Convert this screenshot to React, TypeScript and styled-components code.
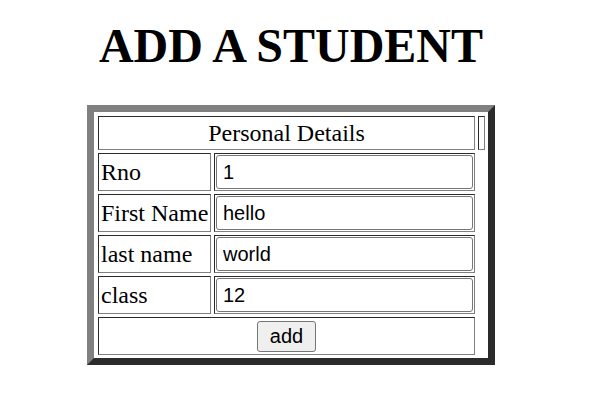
import React from "react";
import styled, { createGlobalStyle } from "styled-components";

const GlobalStyle = createGlobalStyle`
  html, body {
    margin: 0;
    padding: 0;
    background: #ffffff;
  }
  body {
    font-family: "Liberation Serif", "Times New Roman", serif;
    color: #000000;
  }
`;

const Page = styled.div`
  margin: 0 21px 0 12px;
`;

const Heading = styled.h1`
  margin: 18px 0 32px;
  font-family: "Liberation Serif", "Times New Roman", serif;
  font-size: 48px;
  font-weight: bold;
  line-height: normal;
  text-align: center;
`;

const Frame = styled.form`
  box-sizing: border-box;
  width: 408px;
  margin: 0 auto;
  border: 7px solid;
  border-color: #808080 #2b2b2b #2b2b2b #808080;
  padding: 4px 3px 3px 4px;
  display: grid;
  grid-template-columns: 113px 261px 7px;
  grid-template-rows: 34px repeat(5, 38px);
  gap: 3px;
`;

const Cell = styled.div<{ $span?: boolean; $center?: boolean; $col?: number }>`
  box-sizing: border-box;
  grid-column: ${(p) => (p.$span ? "1 / span 2" : p.$col ? `${p.$col}` : "auto")};
  border: 1px solid;
  border-color: #2b2b2b #808080 #808080 #2b2b2b;
  padding: 0 2px;
  display: flex;
  align-items: center;
  justify-content: ${(p) => (p.$center ? "center" : "flex-start")};
  font-family: "Liberation Serif", "Times New Roman", serif;
  font-size: 24px;
  line-height: normal;
  white-space: nowrap;
  overflow: hidden;
`;

const FieldCell = styled(Cell)`
  padding: 1px;
  align-items: stretch;
`;

const Input = styled.input`
  box-sizing: border-box;
  flex: 1;
  min-width: 0;
  height: 34px;
  margin: 0;
  padding: 0 6px;
  border: 1px solid #767676;
  border-radius: 3px;
  background: #ffffff;
  font-family: "Liberation Sans", Arial, sans-serif;
  font-size: 20px;
  color: #000000;
  outline: none;
`;

const Button = styled.button`
  box-sizing: border-box;
  width: 59px;
  height: 31px;
  margin: 0;
  padding: 0;
  border: 1px solid #767676;
  border-radius: 3px;
  background: #efefef;
  font-family: "Liberation Sans", Arial, sans-serif;
  font-size: 20px;
  color: #000000;
`;

const fields = [
  { label: "Rno", value: "1" },
  { label: "First Name", value: "hello" },
  { label: "last name", value: "world" },
  { label: "class", value: "12" },
];

export default function App() {
  return (
    <>
      <GlobalStyle />
      <Page>
        <Heading>ADD A STUDENT</Heading>
        <Frame onSubmit={(e) => e.preventDefault()}>
          <Cell $span $center>
            Personal Details
          </Cell>
          <Cell $col={3} />
          {fields.map((f) => (
            <React.Fragment key={f.label}>
              <Cell $col={1}>{f.label}</Cell>
              <FieldCell $col={2}>
                <Input type="text" defaultValue={f.value} />
              </FieldCell>
            </React.Fragment>
          ))}
          <Cell $span $center>
            <Button type="submit">add</Button>
          </Cell>
        </Frame>
      </Page>
    </>
  );
}
